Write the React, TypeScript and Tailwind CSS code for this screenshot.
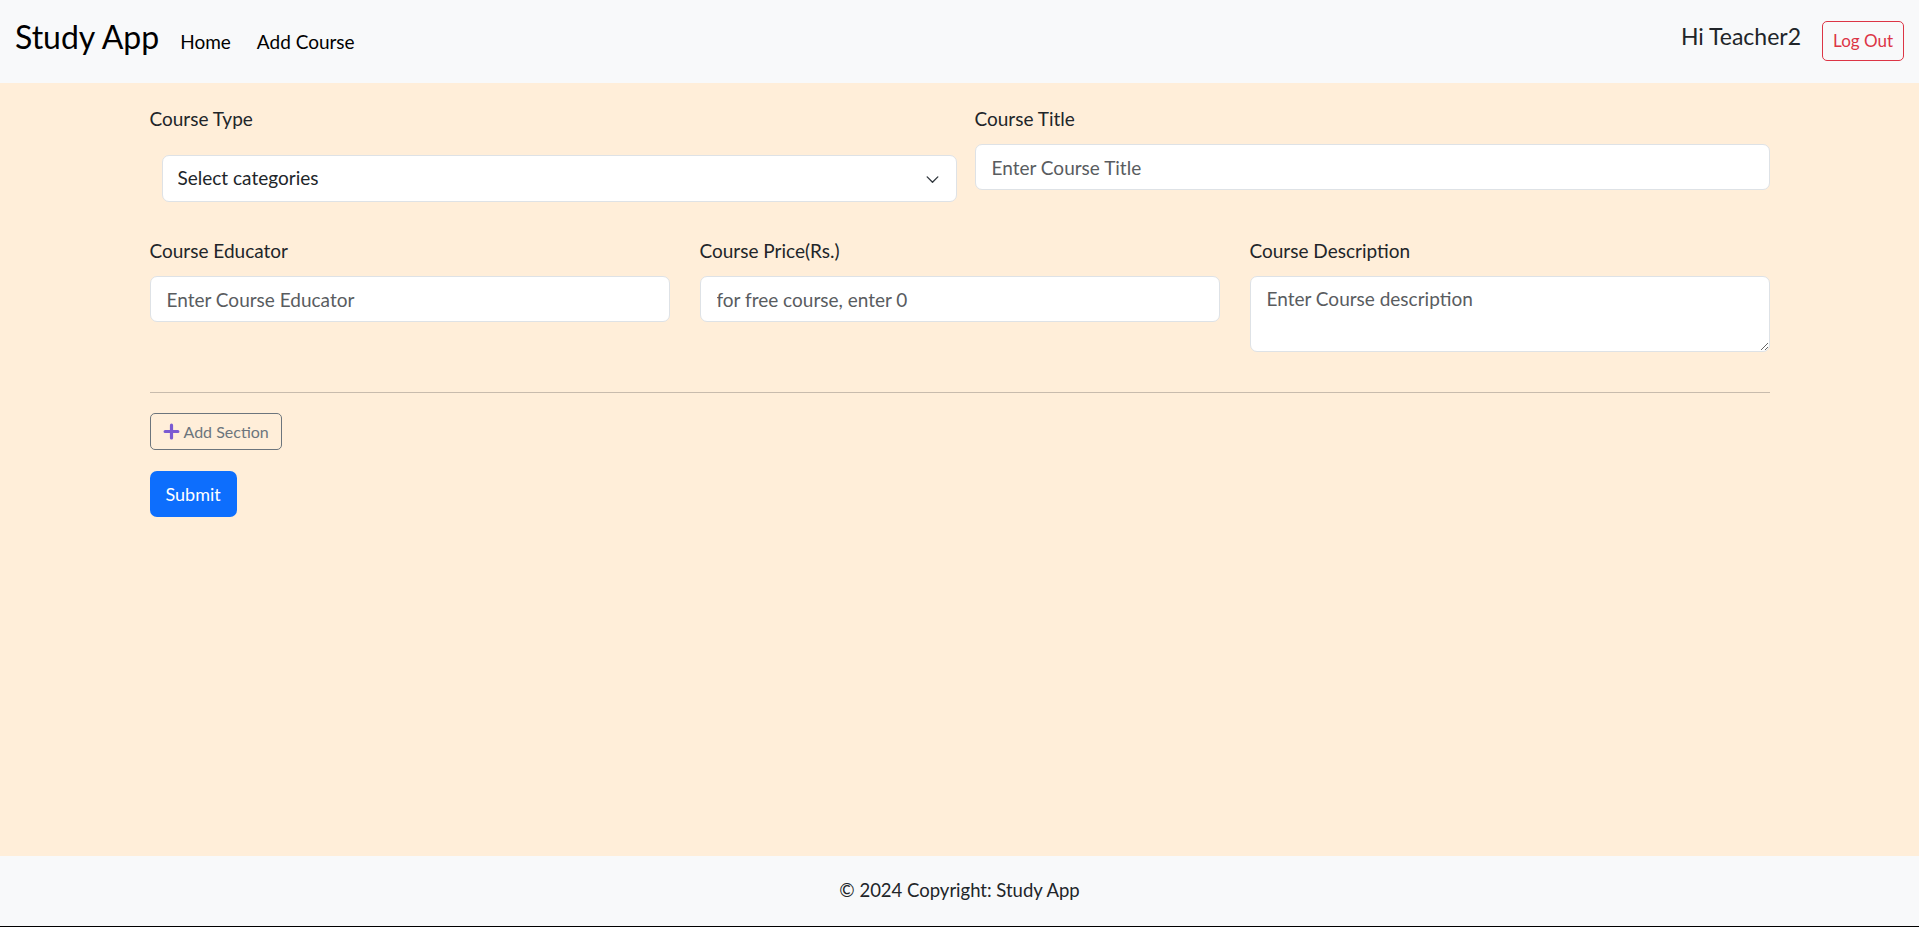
import { useState } from 'react';

function Field({ label, children }: { label: string; children: React.ReactNode }) {
  return (
    <div>
      <label className="block text-[19px] leading-[30px] text-[#212529] mb-[10px]">{label}</label>
      {children}
    </div>
  );
}

const inputCls =
  'w-full h-[46px] px-[16px] bg-white border border-[#dee2e6] rounded-[7px] text-[19px] text-[#212529] placeholder:text-[#595c5f] focus:outline-none';

export default function App() {
  const [category, setCategory] = useState('');

  return (
    <div className="min-h-screen flex flex-col font-['Lato',_'Open_Sans',_sans-serif] text-[#212529]">
      <header className="h-[83px] bg-[#f8f9fa] flex items-start justify-between px-[15px]">
        <div className="flex items-baseline pt-[18px] leading-[38px]">
          <a className="text-[32px] text-black mr-[21px]">Study App</a>
          <a className="text-[19px] text-black mr-[26px]">Home</a>
          <a className="text-[19px] text-black">Add Course</a>
        </div>
        <div className="flex items-center gap-[21px] pt-[21px]">
          <span className="text-[23px] leading-[28px] -mt-[11px] text-[#212529]">Hi Teacher2</span>
          <button className="h-[40px] px-[10px] border border-[#dc3545] rounded-[5px] text-[17px] text-[#dc3545]">
            Log Out
          </button>
        </div>
      </header>

      <main className="flex-1 bg-[#ffeed9]">
        <div className="w-[1620px] mx-auto pt-[21px]">
          <div className="grid grid-cols-[807px_795px] gap-x-[18px]">
            <div>
              <label className="block text-[19px] leading-[30px]">Course Type</label>
              <div className="relative ml-[12px] mt-[21px]">
                <select
                  value={category}
                  onChange={(e) => setCategory(e.target.value)}
                  className="appearance-none w-full h-[47px] pl-[15px] pr-[50px] bg-white border border-[#dee2e6] rounded-[7px] text-[19px] text-[#212529] focus:outline-none"
                >
                  <option value="">Select categories</option>
                  <option value="programming">Programming</option>
                  <option value="design">Design</option>
                </select>
                <svg
                  className="absolute right-[16px] top-1/2 -translate-y-1/2 w-[17px] h-[17px] pointer-events-none"
                  viewBox="0 0 16 16"
                  fill="none"
                  stroke="#343a40"
                  strokeWidth="1.3"
                  strokeLinecap="round"
                  strokeLinejoin="round"
                >
                  <path d="M3 6l5 5 5-5" />
                </svg>
              </div>
            </div>
            <Field label="Course Title">
              <input type="text" placeholder="Enter Course Title" className={inputCls} />
            </Field>
          </div>

          <div className="grid grid-cols-3 gap-x-[30px] mt-[34px]">
            <Field label="Course Educator">
              <input type="text" placeholder="Enter Course Educator" className={inputCls} />
            </Field>
            <Field label="Course Price(Rs.)">
              <input type="text" placeholder="for free course, enter 0" className={inputCls} />
            </Field>
            <Field label="Course Description">
              <textarea
                placeholder="Enter Course description"
                className="block w-full h-[76px] px-[16px] pt-[8px] bg-white border border-[#dee2e6] rounded-[7px] text-[19px] text-[#212529] placeholder:text-[#595c5f] focus:outline-none"
              />
            </Field>
          </div>

          <hr className="mt-[40px] border-0 border-t border-[#c8bbad]" />

          <button className="mt-[20px] h-[37px] px-[12px] flex items-center gap-[4px] border border-[#6c757d] rounded-[5px] text-[16px] text-[#6c757d]">
            <svg viewBox="0 0 16 16" className="w-[17px] h-[17px]" fill="none" stroke="#7a5ad2" strokeWidth="3" strokeLinecap="round">
              <path d="M8 2v12M2 8h12" />
            </svg>
            Add Section
          </button>

          <button className="mt-[21px] h-[46px] px-[16px] bg-[#0d6efd] rounded-[7px] text-[18px] text-white">
            Submit
          </button>
        </div>
      </main>

      <footer className="h-[71px] bg-[#f8f9fa] border-b border-black flex items-center justify-center">
        <span className="text-[18.5px] text-[#212529]">© 2024 Copyright: Study App</span>
      </footer>
    </div>
  );
}
